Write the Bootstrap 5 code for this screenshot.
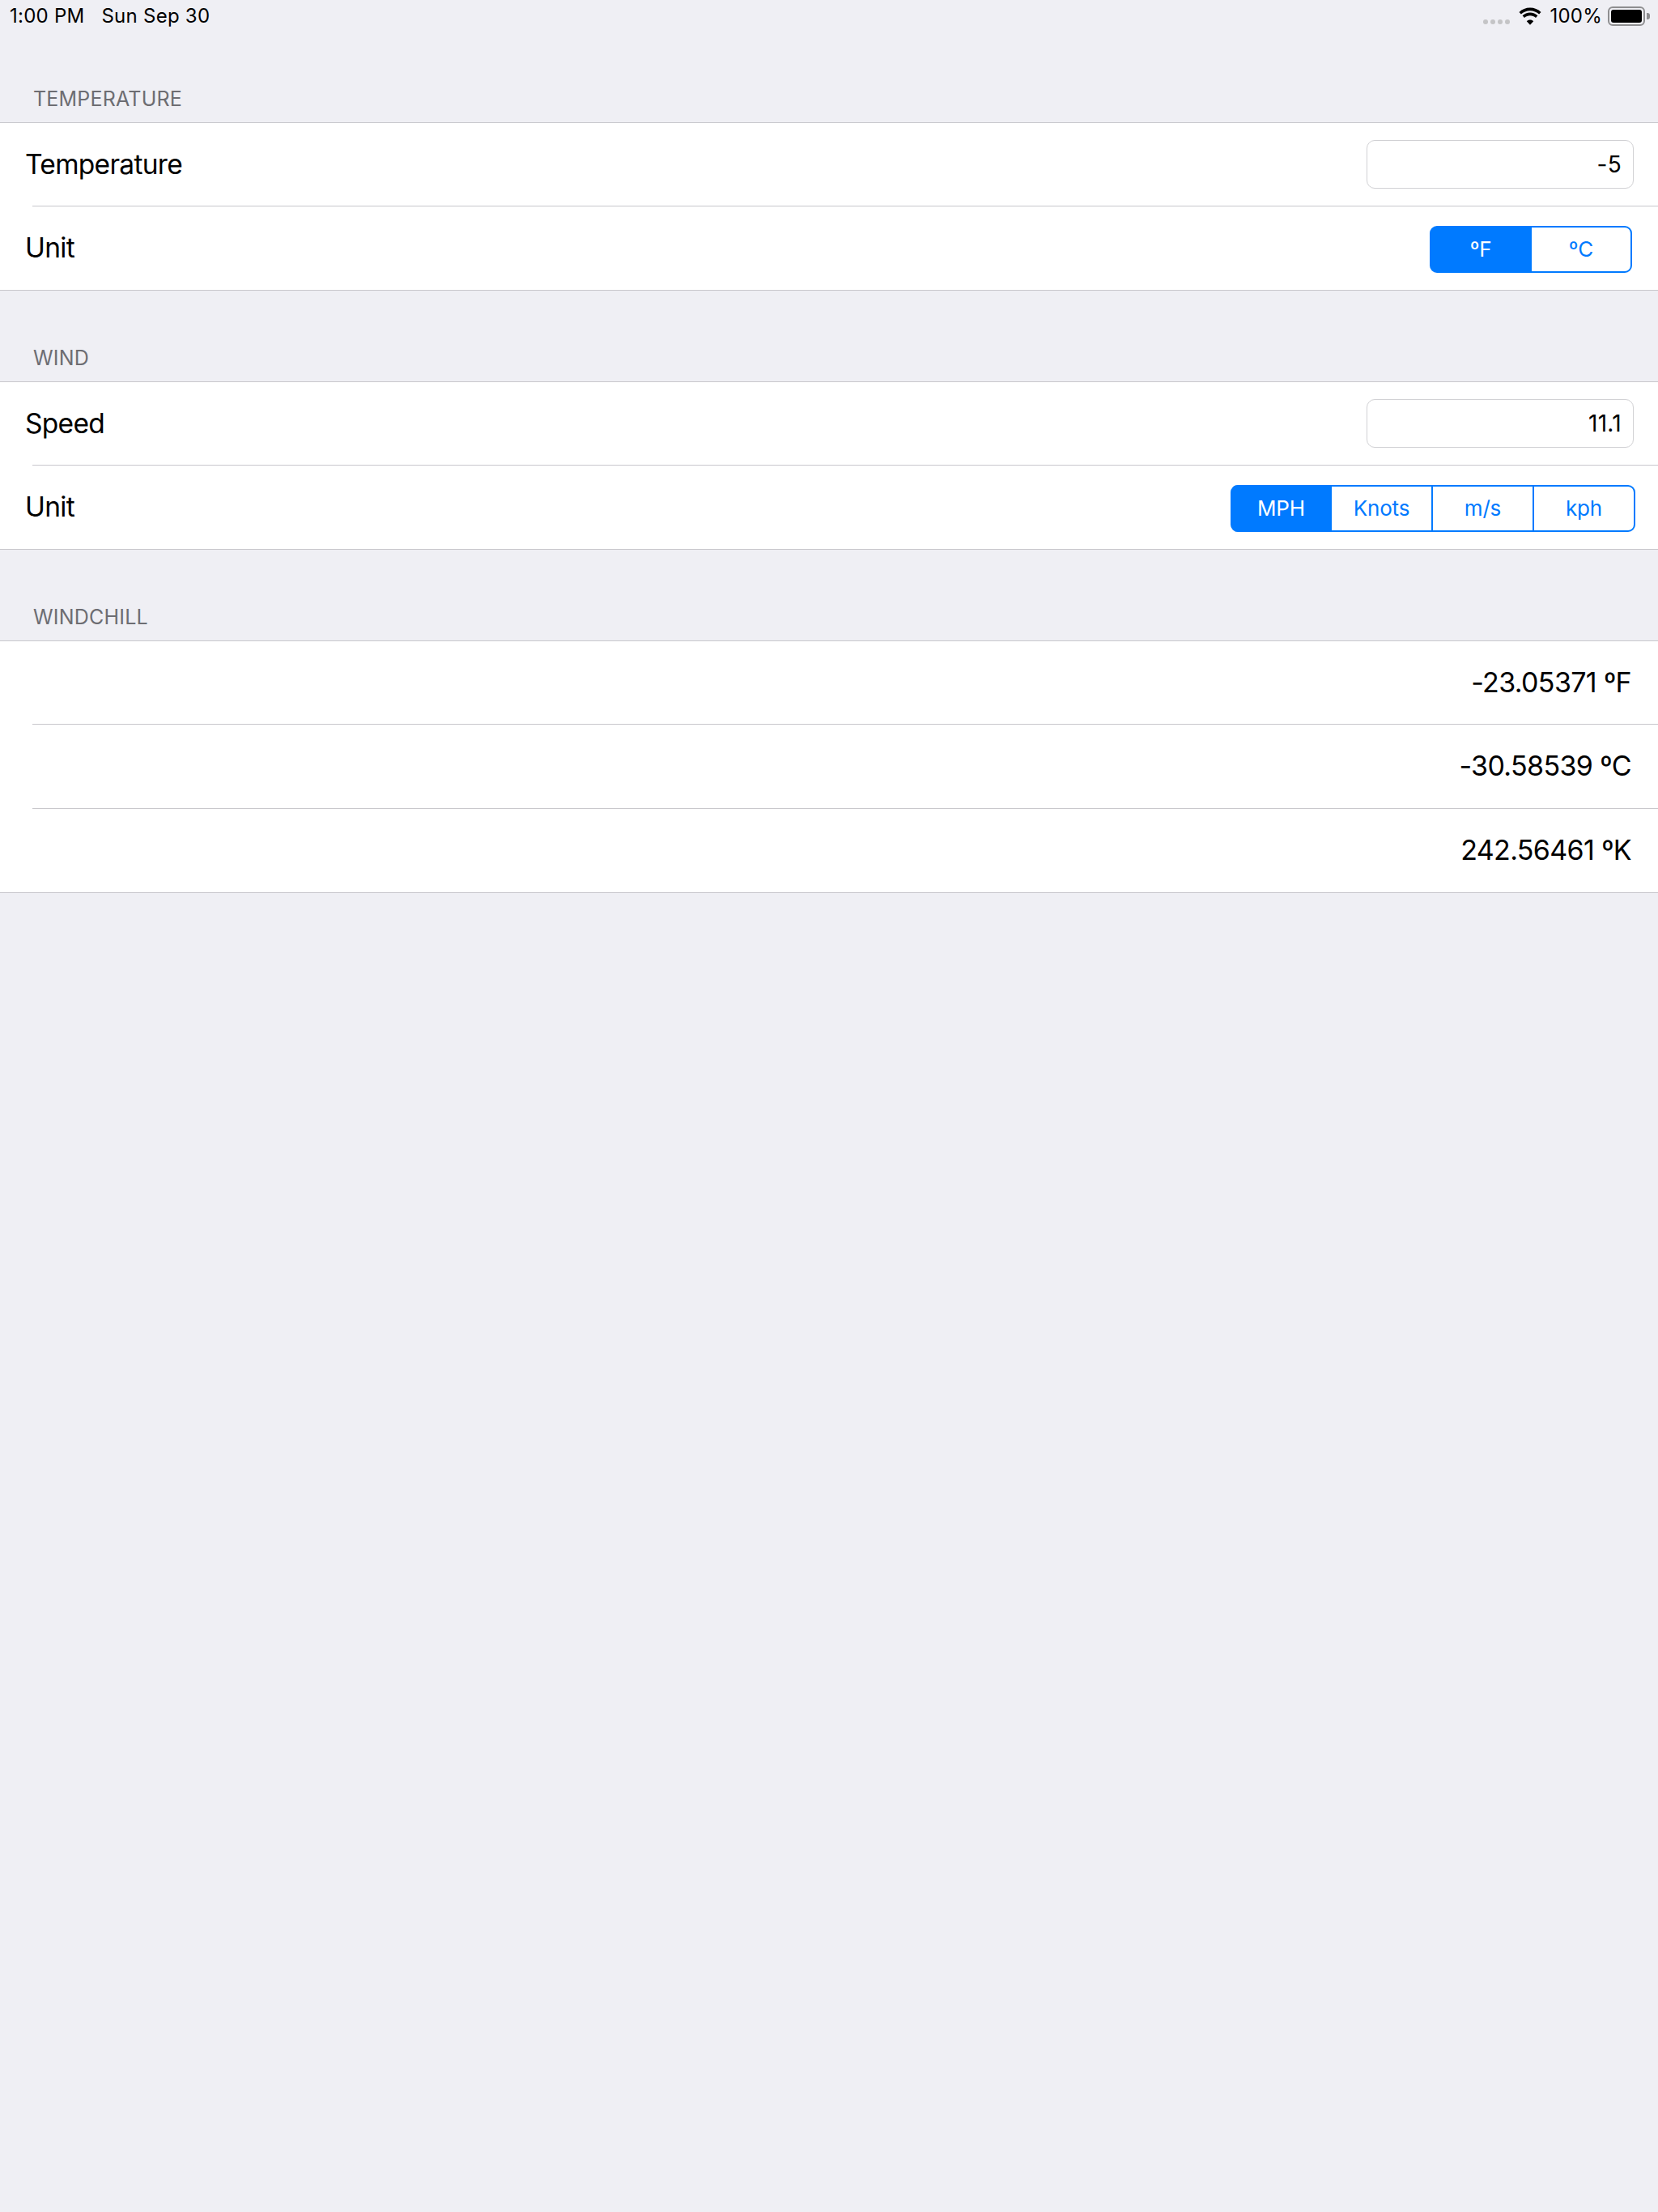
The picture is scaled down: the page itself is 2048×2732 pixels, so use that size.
<!DOCTYPE html>
<html lang="en">
<head>
<meta charset="utf-8">
<title>Windchill</title>
<link rel="stylesheet" href="https://cdn.jsdelivr.net/npm/bootstrap@5.3.0/dist/css/bootstrap.min.css">
<style>
html, body { background: #efeff4; min-height: 2732px; }
body { font-family: Inter, "Liberation Sans", sans-serif; color: #000; margin: 0; }
.status-strip { height: 40px; padding: 0 10px 0 12px; font-size: 24px; line-height: 40px; letter-spacing: .25px; }
.status-date { margin-left: 21px; }
.signal-dots { gap: 2.5px; margin-top: 14px; }
.signal-dots span { width: 6.5px; height: 6.5px; border-radius: 50%; background: #c4c4c6; }
.wifi-glyph { width: 30px; height: 22px; margin-left: 10px; margin-right: 9px; }
.batt-shell { width: 46px; height: 24px; border: 2px solid #8e8e90; border-radius: 6px; padding: 2px; margin-left: 7px; }
.batt-fill { width: 100%; height: 100%; background: #000; border-radius: 3px; }
.batt-nub { width: 4px; height: 8px; background: #8e8e90; border-radius: 0 3px 3px 0; margin-left: 2px; }
.group-title { height: 112px; padding: 0 0 14px 41px; font-size: 25px; line-height: 30px; color: #6d6d72; letter-spacing: .2px; }
.group-title.first-title { height: 111px; }
.group-body { background: #fff; border-top: 1px solid #c8c7cc; border-bottom: 1px solid #c8c7cc; }
.cell-row { height: 103px; padding: 0 32px 0 31px; font-size: 33.5px; letter-spacing: -.7px; }
.cell-row:first-child { height: 102px; }
.cell-rule { height: 1px; margin-left: 40px; background: #c8c7cc; }
.value-box.form-control { width: 330px; height: 60px; border: 1px solid #d1d1d4; border-radius: 10px; padding: 0 14px; font-size: 28px; text-align: right; color: #000; font-family: inherit; box-shadow: none; background: #fff; letter-spacing: .3px; margin-right: -2px; }
.seg-bar { margin-top: 2px; }
.seg-bar .btn { height: 58px; padding: 0; font-size: 26px; line-height: 1; border: 2px solid #007aff; color: #007aff; background: #fff; border-radius: 9px; letter-spacing: -.2px; }
.seg-bar .btn.active { background: #007aff; color: #fff; }
.seg-two .btn { width: 126px; }
.seg-four .btn { width: 127px; }
.seg-four .btn:first-child { width: 125px; }
.seg-four { margin-right: -4px; }
.seg-bar.btn-group > .btn:not(:first-child) { margin-left: -2px; }
.result-line { font-size: 34px; letter-spacing: -.65px; justify-content: flex-end; padding-right: 33px; padding-bottom: 2px; }
</style>
</head>
<body>
<div class="status-strip d-flex align-items-center">
  <span>1:00 PM</span><span class="status-date">Sun Sep 30</span>
  <div class="ms-auto d-flex align-items-center">
    <div class="signal-dots d-flex"><span></span><span></span><span></span><span></span></div>
    <svg class="wifi-glyph" viewBox="0 0 30 22" aria-hidden="true"><path fill="#000" d="M15 4.2c4.3 0 8.2 1.7 11.1 4.4l2.4-2.6C24.9 2.6 20.2.6 15 .6S5.100 2.600 1.500 6l2.400 2.600C6.800 5.900 10.700 4.200 15 4.200zM15 10.200c2.700 0 5.100 1 7 2.700l2.400-2.600c-2.500-2.300-5.800-3.700-9.400-3.700s-6.900 1.400-9.400 3.700L8 12.900c1.900-1.700 4.300-2.700 7-2.700zM15 15.600c-1.600 0-3.100.6-4.200 1.700L15 21.800l4.200-4.500c-1.100-1.100-2.600-1.700-4.200-1.700z"/></svg>
    <span>100%</span>
    <div class="batt-shell"><div class="batt-fill"></div></div>
    <div class="batt-nub"></div>
  </div>
</div>

<div class="group-title first-title d-flex align-items-end">TEMPERATURE</div>
<div class="group-body">
  <div class="cell-row d-flex align-items-center justify-content-between">
    <span>Temperature</span>
    <input class="form-control value-box" type="text" value="-5">
  </div>
  <div class="cell-rule"></div>
  <div class="cell-row d-flex align-items-center justify-content-between">
    <span>Unit</span>
    <div class="btn-group seg-bar seg-two" role="group">
      <button type="button" class="btn active">ºF</button>
      <button type="button" class="btn">ºC</button>
    </div>
  </div>
</div>

<div class="group-title d-flex align-items-end">WIND</div>
<div class="group-body">
  <div class="cell-row d-flex align-items-center justify-content-between">
    <span>Speed</span>
    <input class="form-control value-box" type="text" value="11.1">
  </div>
  <div class="cell-rule"></div>
  <div class="cell-row d-flex align-items-center justify-content-between">
    <span>Unit</span>
    <div class="btn-group seg-bar seg-four" role="group">
      <button type="button" class="btn active">MPH</button>
      <button type="button" class="btn">Knots</button>
      <button type="button" class="btn">m/s</button>
      <button type="button" class="btn">kph</button>
    </div>
  </div>
</div>

<div class="group-title d-flex align-items-end">WINDCHILL</div>
<div class="group-body">
  <div class="cell-row result-line d-flex align-items-center">-23.05371 ºF</div>
  <div class="cell-rule"></div>
  <div class="cell-row result-line d-flex align-items-center">-30.58539 ºC</div>
  <div class="cell-rule"></div>
  <div class="cell-row result-line d-flex align-items-center">242.56461 ºK</div>
</div>
<script src="https://cdn.jsdelivr.net/npm/bootstrap@5.3.0/dist/js/bootstrap.bundle.min.js"></script>
</body>
</html>
